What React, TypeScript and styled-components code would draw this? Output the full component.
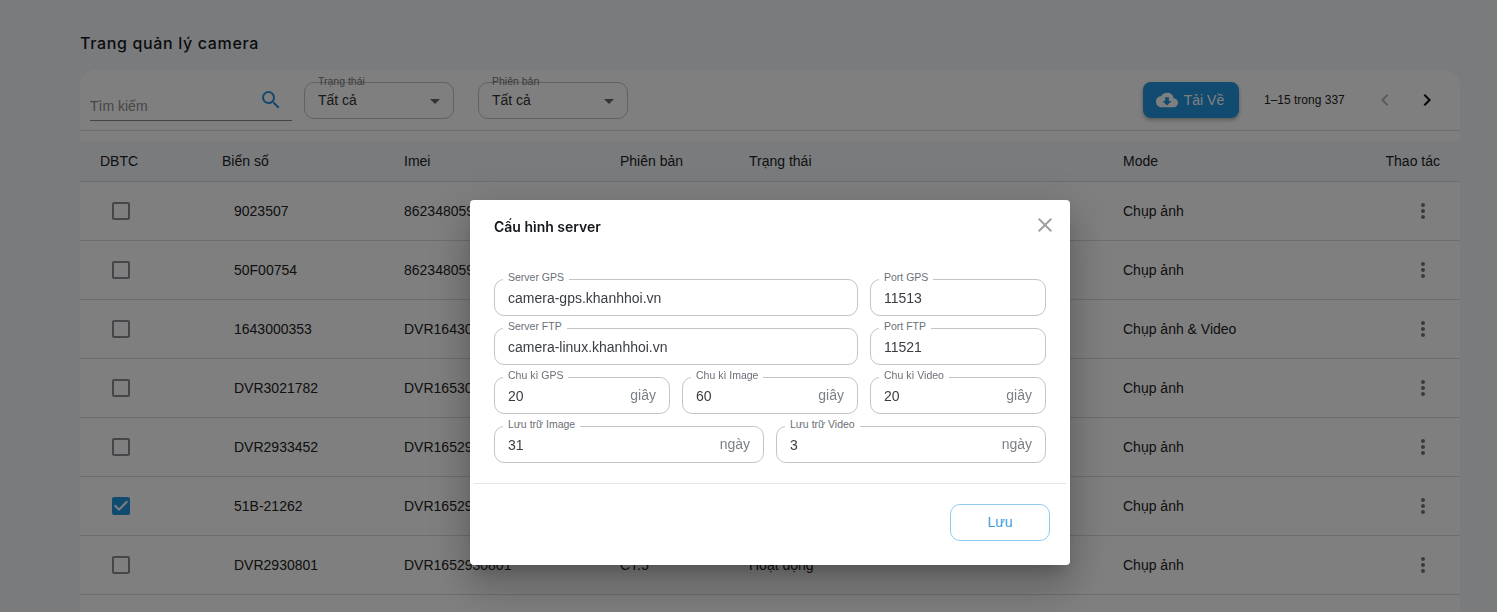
import styled, { createGlobalStyle } from "styled-components";
import {
  MdArrowDropDown,
  MdCheckBox,
  MdCheckBoxOutlineBlank,
  MdChevronLeft,
  MdChevronRight,
  MdClose,
  MdCloudDownload,
  MdMoreVert,
  MdSearch,
} from "react-icons/md";

const rows = [
  { plate: "9023507", imei: "862348059123507", version: "CT.5", status: "Hoạt động", mode: "Chụp ảnh", checked: false },
  { plate: "50F00754", imei: "862348059200754", version: "CT.5", status: "Hoạt động", mode: "Chụp ảnh", checked: false },
  { plate: "1643000353", imei: "DVR1643000353", version: "CT.5", status: "Hoạt động", mode: "Chụp ảnh & Video", checked: false },
  { plate: "DVR3021782", imei: "DVR1653021782", version: "CT.5", status: "Hoạt động", mode: "Chụp ảnh", checked: false },
  { plate: "DVR2933452", imei: "DVR1652933452", version: "CT.5", status: "Hoạt động", mode: "Chụp ảnh", checked: false },
  { plate: "51B-21262", imei: "DVR1652921262", version: "CT.5", status: "Hoạt động", mode: "Chụp ảnh", checked: true },
  { plate: "DVR2930801", imei: "DVR1652930801", version: "CT.5", status: "Hoạt động", mode: "Chụp ảnh", checked: false },
];

const fields = [
  { label: "Server GPS", value: "camera-gps.khanhhoi.vn", span: 8 },
  { label: "Port GPS", value: "11513", span: 4 },
  { label: "Server FTP", value: "camera-linux.khanhhoi.vn", span: 8 },
  { label: "Port FTP", value: "11521", span: 4 },
  { label: "Chu kì GPS", value: "20", unit: "giây", span: 4 },
  { label: "Chu kì Image", value: "60", unit: "giây", span: 4 },
  { label: "Chu kì Video", value: "20", unit: "giây", span: 4 },
  { label: "Lưu trữ Image", value: "31", unit: "ngày", span: 6 },
  { label: "Lưu trữ Video", value: "3", unit: "ngày", span: 6 },
];

export default function App() {
  return (
    <>
      <GlobalStyle />
      <Page>
        <Title>Trang quản lý camera</Title>
        <Card>
          <Toolbar>
            <SearchBox>
              <Placeholder>Tìm kiếm</Placeholder>
              <SearchIcon size={24} />
            </SearchBox>
            <Select $gap={24}>
              <SelectLabel>Trạng thái</SelectLabel>
              <SelectValue>Tất cả</SelectValue>
              <MdArrowDropDown size={24} />
            </Select>
            <Select>
              <SelectLabel>Phiên bản</SelectLabel>
              <SelectValue>Tất cả</SelectValue>
              <MdArrowDropDown size={24} />
            </Select>
            <DownloadButton>
              <MdCloudDownload size={22} />
              Tải Về
            </DownloadButton>
            <PageInfo>1–15 trong 337</PageInfo>
            <PageArrow $disabled>
              <MdChevronLeft size={24} />
            </PageArrow>
            <PageArrow>
              <MdChevronRight size={24} />
            </PageArrow>
          </Toolbar>
          <HeaderRow>
            <span>DBTC</span>
            <span>Biển số</span>
            <span>Imei</span>
            <span>Phiên bản</span>
            <span>Trạng thái</span>
            <span>Mode</span>
            <HeaderAction>Thao tác</HeaderAction>
          </HeaderRow>
          {rows.map((row) => (
            <Row key={row.plate}>
              <CheckCell $checked={row.checked}>
                {row.checked ? <MdCheckBox size={24} /> : <MdCheckBoxOutlineBlank size={24} />}
              </CheckCell>
              <PlateCell>{row.plate}</PlateCell>
              <span>{row.imei}</span>
              <span>{row.version}</span>
              <span>{row.status}</span>
              <span>{row.mode}</span>
              <ActionCell>
                <MdMoreVert size={24} />
              </ActionCell>
            </Row>
          ))}
          <EmptyRow />
        </Card>
      </Page>
      <Backdrop>
        <Dialog>
          <DialogHead>
            <DialogTitle>Cấu hình server</DialogTitle>
            <CloseIcon size={24} />
          </DialogHead>
          <FieldGrid>
            {fields.map((f) => (
              <Field key={f.label} $span={f.span}>
                <FieldLabel>{f.label}</FieldLabel>
                <FieldValue>{f.value}</FieldValue>
                {f.unit && <FieldUnit>{f.unit}</FieldUnit>}
              </Field>
            ))}
          </FieldGrid>
          <Divider />
          <DialogFoot>
            <SaveButton>Lưu</SaveButton>
          </DialogFoot>
        </Dialog>
      </Backdrop>
    </>
  );
}

const GlobalStyle = createGlobalStyle`
  html, body {
    margin: 0;
    height: 100%;
    overflow: hidden;
    background: #f4f6fb;
    font-family: "Liberation Sans", Arial, sans-serif;
    font-size: 14px;
    color: #1c1c1c;
  }
`;

const Page = styled.main`
  height: 612px;
  padding: 33px 37px 0 80px;
  overflow: hidden;
  box-sizing: border-box;
`;

const Title = styled.h1`
  margin: 0 0 17px;
  height: 20px;
  font-family: Inter, "Open Sans", sans-serif;
  font-size: 16px;
  line-height: 20px;
  font-weight: 500;
  letter-spacing: 0.65px;
  color: #16181c;
`;

const Card = styled.section`
  background: #fff;
  border-radius: 16px 16px 0 0;
`;

const Toolbar = styled.div`
  display: flex;
  align-items: flex-start;
  height: 61px;
  padding: 12px 21px 0 10px;
  border-bottom: 1px solid #dcdcdc;
  box-sizing: border-box;
`;

const SearchBox = styled.div`
  display: flex;
  align-items: center;
  justify-content: space-between;
  width: 202px;
  height: 39px;
  margin-right: 12px;
  border-bottom: 1px solid #8a8a8a;
  box-sizing: border-box;
`;

const Placeholder = styled.span`
  margin-top: 10px;
  font-size: 14px;
  color: #8e8e8e;
`;

const SearchIcon = styled(MdSearch)`
  margin: -3px 9px 0 0;
  color: #2a90d8;
`;

const Select = styled.div<{ $gap?: number }>`
  position: relative;
  display: flex;
  align-items: center;
  justify-content: space-between;
  width: 150px;
  height: 37px;
  margin-right: ${(p) => p.$gap ?? 0}px;
  padding: 0 6px 0 13px;
  border: 1px solid #c4c4c4;
  border-radius: 10px;
  box-sizing: border-box;
  font-size: 14px;
  color: #333;

  svg {
    color: #666;
  }
`;

const SelectValue = styled.span`
  margin-top: -2px;
`;

const SelectLabel = styled.span`
  position: absolute;
  top: -8px;
  left: 13px;
  font-size: 10.5px;
  line-height: 13px;
  color: #777;
`;

const DownloadButton = styled.button`
  display: flex;
  align-items: center;
  justify-content: center;
  gap: 6px;
  width: 96px;
  height: 36px;
  margin-left: auto;
  padding: 0 2px 0 0;
  border: 0;
  border-radius: 8px;
  background: #2496e0;
  box-shadow: 0 2px 4px rgba(0, 0, 0, 0.3);
  font-family: inherit;
  font-size: 14px;
  color: #fff;
`;

const PageInfo = styled.span`
  margin-left: 25px;
  width: 91px;
  font-size: 12px;
  line-height: 36px;
  color: #222;
`;

const PageArrow = styled.span<{ $disabled?: boolean }>`
  display: flex;
  align-items: center;
  height: 36px;
  margin-left: 18px;
  color: ${(p) => (p.$disabled ? "#b5b5b5" : "#111")};
`;

const columns = "122px 182px 216px 129px 374px 1fr auto";

const HeaderRow = styled.div`
  display: grid;
  grid-template-columns: ${columns};
  align-items: center;
  height: 40px;
  margin-top: 10px;
  padding: 0 20px;
  background: #f4f6fb;
  border-bottom: 1px solid #dcdcdc;
  font-size: 14px;
  color: #222;
`;

const HeaderAction = styled.span`
  text-align: right;
`;

const Row = styled.div`
  display: grid;
  grid-template-columns: ${columns};
  align-items: center;
  height: 58px;
  padding: 0 20px;
  border-bottom: 1px solid #dcdcdc;
  font-size: 14px;
  color: #222;
`;

const EmptyRow = styled.div`
  height: 58px;
`;

const CheckCell = styled.span<{ $checked: boolean }>`
  display: flex;
  margin-left: 9px;
  color: ${(p) => (p.$checked ? "#2496e0" : "#8a8d94")};
`;

const PlateCell = styled.span`
  padding-left: 12px;
`;

const ActionCell = styled.span`
  display: flex;
  justify-content: flex-end;
  padding-right: 5px;
  color: #777;
`;

const Backdrop = styled.div`
  position: fixed;
  inset: 0;
  background: rgba(0, 0, 0, 0.5);
`;

const Dialog = styled.div`
  position: absolute;
  top: 200px;
  left: 470px;
  width: 600px;
  height: 365px;
  background: #fff;
  border-radius: 4px;
  box-shadow: 0 11px 15px -7px rgba(0, 0, 0, 0.2), 0 24px 38px 3px rgba(0, 0, 0, 0.14),
    0 9px 46px 8px rgba(0, 0, 0, 0.12);
`;

const DialogHead = styled.div`
  display: flex;
  align-items: center;
  justify-content: space-between;
  height: 50px;
  padding: 0 13px 0 24px;
  box-sizing: border-box;
  margin-bottom: 29px;
`;

const DialogTitle = styled.h2`
  margin: 2px 0 0;
  font-family: Inter, "Noto Sans", sans-serif;
  font-size: 14px;
  font-weight: 600;
  color: #16181c;
`;

const CloseIcon = styled(MdClose)`
  color: #a0a0a0;
`;

const FieldGrid = styled.div`
  display: grid;
  grid-template-columns: repeat(12, 1fr);
  gap: 12px;
  padding: 0 24px;
`;

const Field = styled.div<{ $span: number }>`
  position: relative;
  grid-column: span ${(p) => p.$span};
  display: flex;
  align-items: center;
  justify-content: space-between;
  height: 37px;
  padding: 0 13px;
  border: 1px solid #c4c4c4;
  border-radius: 10px;
  box-sizing: border-box;
`;

const FieldLabel = styled.label`
  position: absolute;
  top: -9px;
  left: 8px;
  padding: 0 5px;
  background: #fff;
  font-size: 10.5px;
  line-height: 13px;
  color: #6b6f76;
`;

const FieldValue = styled.span`
  font-size: 14px;
  color: #3a3d42;
`;

const FieldUnit = styled.span`
  margin-top: -2px;
  font-size: 14px;
  color: #7b7f86;
`;

const Divider = styled.hr`
  height: 1px;
  margin: 20px 4px 0;
  border: 0;
  background: #e4e4e4;
`;

const DialogFoot = styled.div`
  display: flex;
  justify-content: flex-end;
  padding: 20px 20px 0 0;
`;

const SaveButton = styled.button`
  width: 100px;
  height: 37px;
  padding: 0 0 2px;
  border: 1px solid #8ecbee;
  border-radius: 10px;
  background: #fff;
  font-family: inherit;
  font-size: 14px;
  color: #3a9bdc;
`;
